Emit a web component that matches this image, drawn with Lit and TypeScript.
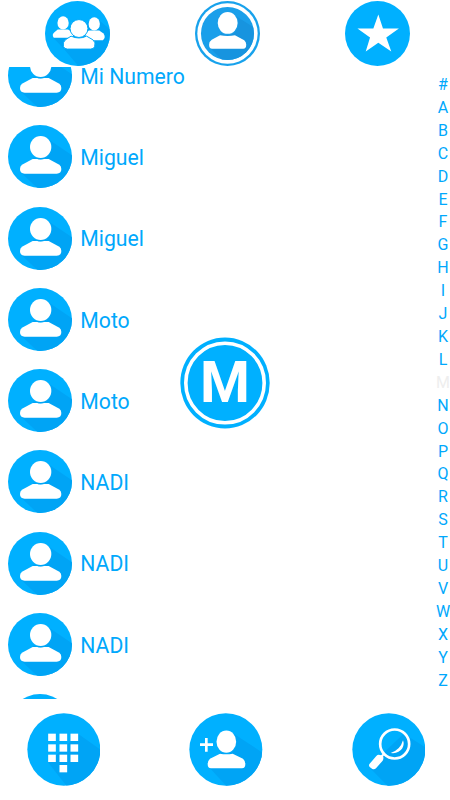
import { LitElement, html, svg, css } from "lit";
import { customElement } from "lit/decorators.js";

const CONTACTS = ["Mi Numero", "Miguel", "Miguel", "Moto", "Moto", "NADI", "NADI", "NADI"];
const LETTERS = "#ABCDEFGHIJKLMNOPQRSTUVWXYZ".split("");
const CURRENT = "M";

const avatar = () => html`<svg class="avatar" viewBox="0 0 192 189" preserveAspectRatio="none">
  <defs><clipPath id="disc"><ellipse cx="96" cy="94.5" rx="96" ry="94.5" /></clipPath></defs>
  <g clip-path="url(#disc)">
    <rect class="base" width="192" height="189" />
    <path class="shade" d="M121 43L192 91V189H88L40 144Z" />
  </g>
  <path class="white" d="M74 102H122L154 119Q160 123 160 132Q160 146 146 146H50Q36 146 36 132Q36 123 42 119Z" />
  <ellipse class="base" cx="98" cy="67" rx="34" ry="36.5" />
  <path class="shade" d="M121 43L130 54Q138 78 119 95Q105 107 85 101Z" />
  <ellipse class="white" cx="98" cy="66" rx="32" ry="33" />
</svg>`;

const groupIcon = svg`
  <defs><clipPath id="g"><circle cx="141.5" cy="100" r="98" /></clipPath></defs>
  <circle class="base" cx="141.5" cy="100" r="98" />
  <path class="shade" clip-path="url(#g)" d="M200 55L245 92V205H150L98 144L68 113Z" />
  <g class="white">
    <path d="M82 88H113L128 98V113H70Q63 103 72 96Z" />
    <ellipse cx="98" cy="68" rx="17" ry="20" />
    <path d="M176 91H207L220 100Q228 112 218 120H166V98Z" />
    <ellipse cx="192" cy="71" rx="17" ry="20" />
  </g>
  <path class="white ring" d="M122 108Q146 119 169 108L188 119Q198 127 193 140Q190 147 181 147H111Q102 147 99 139Q96 127 105 119Z" />
  <ellipse class="white ring" cx="146" cy="85" rx="27" ry="27" />`;

const personIcon = svg`
  <defs><clipPath id="p"><circle cx="141" cy="100" r="80" /></clipPath></defs>
  <circle class="rim" cx="141.5" cy="100" r="98" />
  <circle class="white" cx="141.5" cy="100" r="91" />
  <circle class="deep" cx="141.5" cy="100" r="80" />
  <path class="deeper" clip-path="url(#p)" d="M164 46L222 82V185H130L88 143Z" />
  <path class="white" d="M119 105Q142 110 164 105L192 120Q198 125 198 133Q198 146 189 146H95Q86 146 86 134Q86 124 94 119Z" />
  <ellipse class="deep" cx="142" cy="69" rx="32" ry="36" />
  <ellipse class="white" cx="142" cy="68" rx="30" ry="33" />`;

const starIcon = svg`
  <circle class="base" cx="141.5" cy="100" r="98" />
  <path class="white" d="M144 43L158 85L206 85L168 112L183 154L144 128L106 154L119 112L81 85L129 85Z" />`;

const keypadIcon = svg`
  <defs><clipPath id="k"><ellipse cx="190.5" cy="446.5" rx="109.5" ry="108.5" /></clipPath></defs>
  <ellipse class="base" cx="190.5" cy="446.5" rx="109.5" ry="108.5" />
  <path class="shade" clip-path="url(#k)" d="M234 400L305 450V560H202L144 486Z" />
  ${[399, 431, 462].map((y) => [143.5, 177.5, 210.5].map((x) => svg`<rect class="white" x=${x} y=${y} width="23" height="22" />`))}
  <rect class="white" x="177.5" y="493" width="23" height="22" />`;

const addIcon = svg`
  <defs><clipPath id="a"><ellipse cx="136.5" cy="146.5" rx="109.5" ry="108.5" /></clipPath></defs>
  <ellipse class="base" cx="136.5" cy="146.5" rx="109.5" ry="108.5" />
  <path class="shade" clip-path="url(#a)" d="M160 99L250 158V260H142L86 200Z" />
  <path class="white" d="M59 128H74V112H82V128H98V136H82V153H74V136H59Z" />
  <path class="white" d="M119 159Q138 163 157 159L188 174Q195 180 195 190Q195 203 185 203H92Q82 203 82 190Q82 180 89 174Z" />
  <ellipse class="base" cx="138" cy="124" rx="31" ry="36" />
  <path class="shade" d="M160 99L166 106Q175 134 157 151Q144 163 126 157Z" />
  <ellipse class="white" cx="138" cy="123" rx="29.5" ry="33.5" />`;

const searchIcon = svg`
  <defs><clipPath id="s"><ellipse cx="145.5" cy="146.5" rx="109.5" ry="108.5" /></clipPath></defs>
  <ellipse class="base" cx="145.5" cy="146.5" rx="109.5" ry="108.5" />
  <path class="shade" clip-path="url(#s)" d="M190 99L260 143V260H146L88 201L122 164Z" />
  <circle class="lens" cx="163" cy="130" r="43.5" />
  <path class="white" d="M188 119Q193 130 186 143Q175 160 151 157Q180 148 188 119Z" />
  <path class="handle" d="M132 159L121 169" />
  <path class="white" d="M108 166Q113 160 119 163L128 165Q131 173 127 180L107 203Q102 208 96 205L88 199Q84 194 88 189Z" />`;

@customElement("app-root")
export class AppRoot extends LitElement {
  static styles = css`
    :host {
      display: block;
      width: 450px;
      height: 800px;
      overflow: hidden;
      background: #fff;
      color: #00a8fc;
      font-family: Roboto, sans-serif;
    }
    .screen {
      position: relative;
      display: flex;
      flex-direction: column;
      height: 100%;
    }
    svg {
      display: block;
      flex: none;
    }
    .base { fill: #00b0ff; }
    .shade { fill: #00a4f5; }
    .rim { fill: #18a2ec; }
    .deep { fill: #1a9fea; }
    .deeper { fill: #1794df; }
    .white { fill: #fff; }
    .ring { stroke: #00a8f8; stroke-width: 3; }
    .lens { fill: none; stroke: #fff; stroke-width: 8; }
    .handle { stroke: #fff; stroke-width: 6; }
    .tabs {
      display: flex;
      gap: 85px;
      height: 67px;
      padding: 1px 0 0 45px;
      box-sizing: border-box;
    }
    .tabs svg { width: 65px; height: 65px; }
    .main {
      display: flex;
      justify-content: space-between;
      height: 632px;
    }
    .list {
      flex: 1;
      overflow: hidden;
    }
    .rows { margin-top: -31.9px; }
    .row {
      display: flex;
      align-items: center;
      gap: 8px;
      height: 81.25px;
      padding-left: 8.3px;
      font-size: 21.2px;
      line-height: 26px;
    }
    .name { padding-top: 2.3px; }
    .avatar { width: 64px; height: 63px; }
    .index {
      display: flex;
      flex-direction: column;
      align-items: center;
      width: 14px;
      padding-top: 7px;
      font-size: 16px;
      line-height: 22.9px;
    }
    .letter { white-space: nowrap; }
    .current { color: #eee; }
    .actions {
      display: flex;
      gap: 88.8px;
      padding: 13.5px 0 0 26.67px;
    }
    .actions svg { width: 73.67px; height: 73px; }
    .badge {
      position: absolute;
      left: 180px;
      top: 337px;
      width: 90px;
      height: 92px;
    }
    .initial {
      font: bold 57px Roboto, sans-serif;
      fill: #fff;
      text-anchor: middle;
    }
    .band { fill: none; stroke: #fff; stroke-width: 3.6; }
  `;

  render() {
    return html`<div class="screen">
      <nav class="tabs">
        <svg viewBox="43.5 2 196 196">${groupIcon}</svg>
        <svg viewBox="43.5 2 196 196">${personIcon}</svg>
        <svg viewBox="43.5 2 196 196">${starIcon}</svg>
      </nav>
      <main class="main">
        <div class="list">
          <div class="rows">
            ${CONTACTS.map((name) => html`<div class="row">${avatar()}<span class="name">${name}</span></div>`)}
            <div class="row">${avatar()}</div>
          </div>
        </div>
        <div class="index">
          ${LETTERS.map((l) => html`<span class="letter ${l === CURRENT ? "current" : ""}">${l}</span>`)}
        </div>
      </main>
      <footer class="actions">
        <svg viewBox="80 337 221 219">${keypadIcon}</svg>
        <svg viewBox="26 37 221 219">${addIcon}</svg>
        <svg viewBox="35 37 221 219">${searchIcon}</svg>
      </footer>
      <svg class="badge" viewBox="0 0 90 92">
        <ellipse class="base" cx="45" cy="46" rx="44.7" ry="45.5" />
        <ellipse class="band" cx="45" cy="46" rx="39.2" ry="39.8" />
        <text class="initial" x="45" y="65.3">M</text>
      </svg>
    </div>`;
  }
}
